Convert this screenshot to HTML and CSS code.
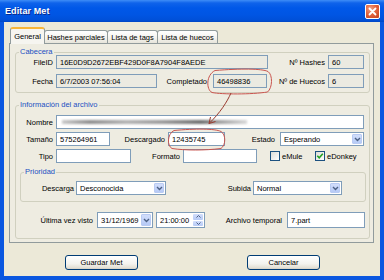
FILE: index.html
```html
<!DOCTYPE html>
<html lang="es">
<head>
<meta charset="utf-8">
<title>Editar Met</title>
<link rel="stylesheet" href="styles.css">
</head>
<body>
<div class="win">
  <div class="titlebar">
    <span class="title">Editar Met</span>
    <span class="close"><svg width="13" height="13" viewBox="0 0 13 13"><path d="M3.5 3.5 L9.5 9.5 M9.5 3.5 L3.5 9.5" stroke="#fff" stroke-width="1.8" stroke-linecap="round"/></svg></span>
  </div>
  <div class="frame">
    <div class="client">
      <div class="tabs">
        <div class="tab active t1">General</div>
        <div class="tab t2">Hashes parciales</div>
        <div class="tab t3">Lista de tags</div>
        <div class="tab t4">Lista de huecos</div>
      </div>
      <div class="panel">
        <fieldset class="grp cab">
          <legend>Cabecera</legend>
          <div class="row first">
            <span class="lbl w37">FileID</span>
            <span class="fld ro w212">16E0D9D2672EBF429D0F8A7904F8AEDE</span>
            <span class="lbl w57">Nº Hashes</span>
            <span class="fld ro w36">60</span>
          </div>
          <div class="row gap5">
            <span class="lbl w37">Fecha</span>
            <span class="fld ro w101">6/7/2003 07:56:04</span>
            <span class="lbl w50 mr6">Completado</span>
            <span class="fld ro w54">46498836</span>
            <span class="lbl w58">Nº de Huecos</span>
            <span class="fld ro w36">6</span>
          </div>
        </fieldset>

        <fieldset class="grp info">
          <legend>Información del archivo</legend>
          <div class="row nombre">
            <span class="lbl w37">Nombre</span>
            <span class="fld w308"><span class="blur"></span></span>
          </div>
          <div class="row gap3">
            <span class="lbl w37">Tamaño</span>
            <span class="fld w54">575264961</span>
            <span class="lbl w55">Descargado</span>
            <span class="fld w57">12435745</span>
            <span class="lbl w50 mr5">Estado</span>
            <span class="fld combo w84"><span class="val">Esperando</span><span class="drop"><svg width="7" height="5" viewBox="0 0 7 5"><path d="M1 1 L3.5 3.5 L6 1" fill="none" stroke="#4D6185" stroke-width="1.4"/></svg></span></span>
          </div>
          <div class="row gap3">
            <span class="lbl w37">Tipo</span>
            <span class="fld w75"></span>
            <span class="lbl w49">Formato</span>
            <span class="fld w74"></span>
            <span class="chk c1"><span class="box"></span>eMule</span>
            <span class="chk"><span class="box"><svg width="8" height="8" viewBox="0 0 8 8"><path d="M1.3 3.8 L3.2 5.8 L6.8 1.8" fill="none" stroke="#21A121" stroke-width="1.6"/></svg></span>eDonkey</span>
          </div>

          <fieldset class="grp prio">
            <legend>Prioridad</legend>
            <div class="row prow">
              <span class="lbl w53 mr2">Descarga</span>
              <span class="fld combo w90"><span class="val">Desconocida</span><span class="drop"><svg width="7" height="5" viewBox="0 0 7 5"><path d="M1 1 L3.5 3.5 L6 1" fill="none" stroke="#4D6185" stroke-width="1.4"/></svg></span></span>
              <span class="lbl w85 mr2">Subida</span>
              <span class="fld combo w89"><span class="val">Normal</span><span class="drop"><svg width="7" height="5" viewBox="0 0 7 5"><path d="M1 1 L3.5 3.5 L6 1" fill="none" stroke="#4D6185" stroke-width="1.4"/></svg></span></span>
            </div>
          </fieldset>

          <div class="row ultima">
            <span class="lbl w77 mr4">Última vez visto</span>
            <span class="fld combo w56"><span class="val">31/12/1969</span><span class="drop"><svg width="7" height="5" viewBox="0 0 7 5"><path d="M1 1 L3.5 3.5 L6 1" fill="none" stroke="#4D6185" stroke-width="1.4"/></svg></span></span>
            <span class="fld combo w49 ml3"><span class="val">21:00:00</span><span class="spin"><span class="sb"><svg width="5" height="3" viewBox="0 0 5 3"><path d="M0.5 2.5 L2.5 0.5 L4.5 2.5" fill="none" stroke="#4D6185" stroke-width="1"/></svg></span><span class="sb"><svg width="5" height="3" viewBox="0 0 5 3"><path d="M0.5 0.5 L2.5 2.5 L4.5 0.5" fill="none" stroke="#4D6185" stroke-width="1"/></svg></span></span></span>
            <span class="lbl w77 mr5">Archivo temporal</span>
            <span class="fld w78">7.part</span>
          </div>
        </fieldset>
      </div>
      <div class="btns">
        <span class="btn">Guardar Met</span>
        <span class="btn">Cancelar</span>
      </div>
    </div>
  </div>
  <svg class="notes" width="384" height="280" viewBox="0 0 384 280">
    <path d="M215 70.5 C240 68.5 262 68.5 268 71.5 C273 75 272.5 88 267.5 92 C252 94.5 222 94.5 212 92.5 C206 89.5 206 75 215 70.5 Z" fill="none" stroke="#C9544E" stroke-width="1"/>
    <path d="M174 130.5 C195 128.5 215 128.5 221 131.5 C226 134.5 226 145 221 148.5 C205 150.5 185 150.5 172 148.5 C167 146 167 134 174 130.5 Z" fill="none" stroke="#C9544E" stroke-width="1"/>
    <path d="M231 93 C227 102 220 113 209 123.5 M209 123.5 L210.5 117 M209 123.5 L215.5 121.5" fill="none" stroke="#9A3A2E" stroke-width="1"/>
  </svg>
</div>
</body>
</html>
```

FILE: styles.css
```css
* { box-sizing: border-box; }
html, body { margin: 0; padding: 0; }
body {
  width: 384px;
  height: 280px;
  overflow: hidden;
  font-family: "Liberation Sans", Arial, sans-serif;
  font-size: 7.5px;
  color: #000;
  background: #fff;
}
.win {
  position: relative;
  width: 384px;
  height: 280px;
  background: #0A57E0;
  display: flex;
  flex-direction: column;
}
.titlebar {
  height: 22px;
  display: flex;
  align-items: center;
  padding: 0 4px 0 5px;
  background: linear-gradient(#3E8DF7 0px, #0F63EA 3px, #0058E8 8px, #0055E3 15px, #0050D8 20px, #0046C4 22px);
}
.title {
  color: #fff;
  font-weight: bold;
  font-size: 9px;
  text-shadow: 1px 1px 0 #0A2A8A;
  letter-spacing: 0.1px;
}
.close {
  margin-left: auto;
  width: 15px;
  height: 15px;
  border: 1px solid #fff;
  border-radius: 2px;
  background: radial-gradient(circle at 35% 30%, #F2A184 0, #E2643E 45%, #C5401C 100%);
  display: flex;
  align-items: center;
  justify-content: center;
}
.frame {
  flex: 1;
  padding: 0 4px 4px 4px;
  display: flex;
}
.client {
  flex: 1;
  background: #ECE9D8;
  padding: 5px 6px 0 5px;
  display: flex;
  flex-direction: column;
}
.tabs {
  height: 16px;
  display: flex;
  align-items: flex-end;
}
.tab {
  height: 13px;
  border: 1px solid #919B9C;
  border-bottom: none;
  border-radius: 3px 3px 0 0;
  background: linear-gradient(#FFFFFF, #F3F2ED 60%, #E6E4DA);
  display: flex;
  align-items: center;
  justify-content: center;
  white-space: nowrap;
  margin-left: -1px;
}
.tab.active {
  height: 17px;
  margin-bottom: -1px;
  background: #F6F5F0;
  border-top: 2px solid #F8B538;
  position: relative;
  z-index: 1;
  padding-bottom: 1px;
}
.t1 { width: 35px; margin-left: 1px; }
.t2 { width: 64px; }
.t3 { width: 51px; }
.t4 { width: 61px; }
.panel {
  height: 200px;
  border: 1px solid #919B9C;
  background: #EEECE1;
  padding: 0 3px 0 5px;
}
.grp {
  margin: 0;
  padding: 0;
  min-width: 0;
  border: 1px solid #D0D0BF;
  border-radius: 3px;
}
.grp legend {
  color: #1B4FC2;
  padding: 0 1px;
  margin-left: 3px;
  line-height: 8px;
  font-size: 7.5px;
}
.cab { margin-top: 4px; padding-bottom: 4px; }
.info { margin-top: 8px; padding-bottom: 10px; }
.prio { margin: 5px 3px 0 4px; padding-bottom: 6px; }
.row {
  display: flex;
  align-items: center;
  height: 14px;
  white-space: nowrap;
}
.row.first { margin-top: -1px; }
.row.gap5 { margin-top: 5px; }
.row.gap3 { margin-top: 3px; }
.row.nombre { margin-top: 6px; }
.row.prow { margin-top: 5px; }
.row.ultima { margin-top: 10px; height: 16px; }
.lbl {
  text-align: right;
  margin-right: 3px;
  flex: none;
}
.fld {
  flex: none;
  height: 100%;
  border: 1px solid #7F9DB9;
  background: #fff;
  padding-left: 3px;
  display: flex;
  align-items: center;
  overflow: hidden;
}
.fld.ro { background: #EBEAE1; }
.combo { padding-right: 1px; }
.combo .val { flex: 1; }
.drop {
  width: 10px;
  height: calc(100% - 2px);
  border-radius: 1px;
  background: linear-gradient(#D2DEFB, #B6CAF6);
  border: 1px solid #B9CBF3;
  display: flex;
  align-items: center;
  justify-content: center;
}
.spin {
  width: 10px;
  height: calc(100% - 2px);
  display: flex;
  flex-direction: column;
  gap: 1px;
}
.sb {
  flex: 1;
  border-radius: 1px;
  background: linear-gradient(#D2DEFB, #B6CAF6);
  display: flex;
  align-items: center;
  justify-content: center;
}
.blur {
  width: 185px;
  height: 4px;
  margin-left: 2px;
  background: linear-gradient(90deg, #c9c9c9 0%, #8f8f8f 15%, #b3b3b3 35%, #9a9a9a 55%, #6f6f6f 75%, #a0a0a0 85%, #d8d8d8 100%);
  filter: blur(1.2px);
}
.chk {
  display: flex;
  align-items: center;
  gap: 2px;
  flex: none;
}
.chk.c1 { margin-left: 13px; width: 45px; }
.box {
  width: 10px;
  height: 10px;
  border: 1px solid #1C5180;
  background: linear-gradient(135deg, #DCDCD7, #FFFFFF);
  display: flex;
  align-items: center;
  justify-content: center;
}
.btns {
  margin-top: 12px;
  height: 15px;
  display: flex;
  padding-left: 56px;
  gap: 109px;
}
.btn {
  width: 73px;
  height: 15px;
  border: 1px solid #003C74;
  border-radius: 3px;
  background: linear-gradient(#FFFFFF, #F4F3EE 60%, #E3E0D5 90%, #D6D0C5);
  display: flex;
  align-items: center;
  justify-content: center;
}
.notes {
  position: absolute;
  left: 0;
  top: 0;
  pointer-events: none;
}
.w36 { width: 36px; }
.w37 { width: 37px; }
.w49 { width: 49px; }
.w50 { width: 50px; }
.w53 { width: 53px; }
.w54 { width: 54px; }
.w55 { width: 55px; }
.w56 { width: 56px; }
.w57 { width: 57px; }
.w58 { width: 58px; }
.w74 { width: 74px; }
.w75 { width: 75px; }
.w77 { width: 77px; }
.w78 { width: 78px; }
.w84 { width: 84px; }
.w85 { width: 85px; }
.w89 { width: 89px; }
.w90 { width: 90px; }
.w101 { width: 101px; }
.w212 { width: 212px; }
.w308 { width: 308px; }
.mr2 { margin-right: 2px; }
.mr4 { margin-right: 4px; }
.mr5 { margin-right: 5px; }
.mr6 { margin-right: 6px; }
.ml3 { margin-left: 3px; }
```
